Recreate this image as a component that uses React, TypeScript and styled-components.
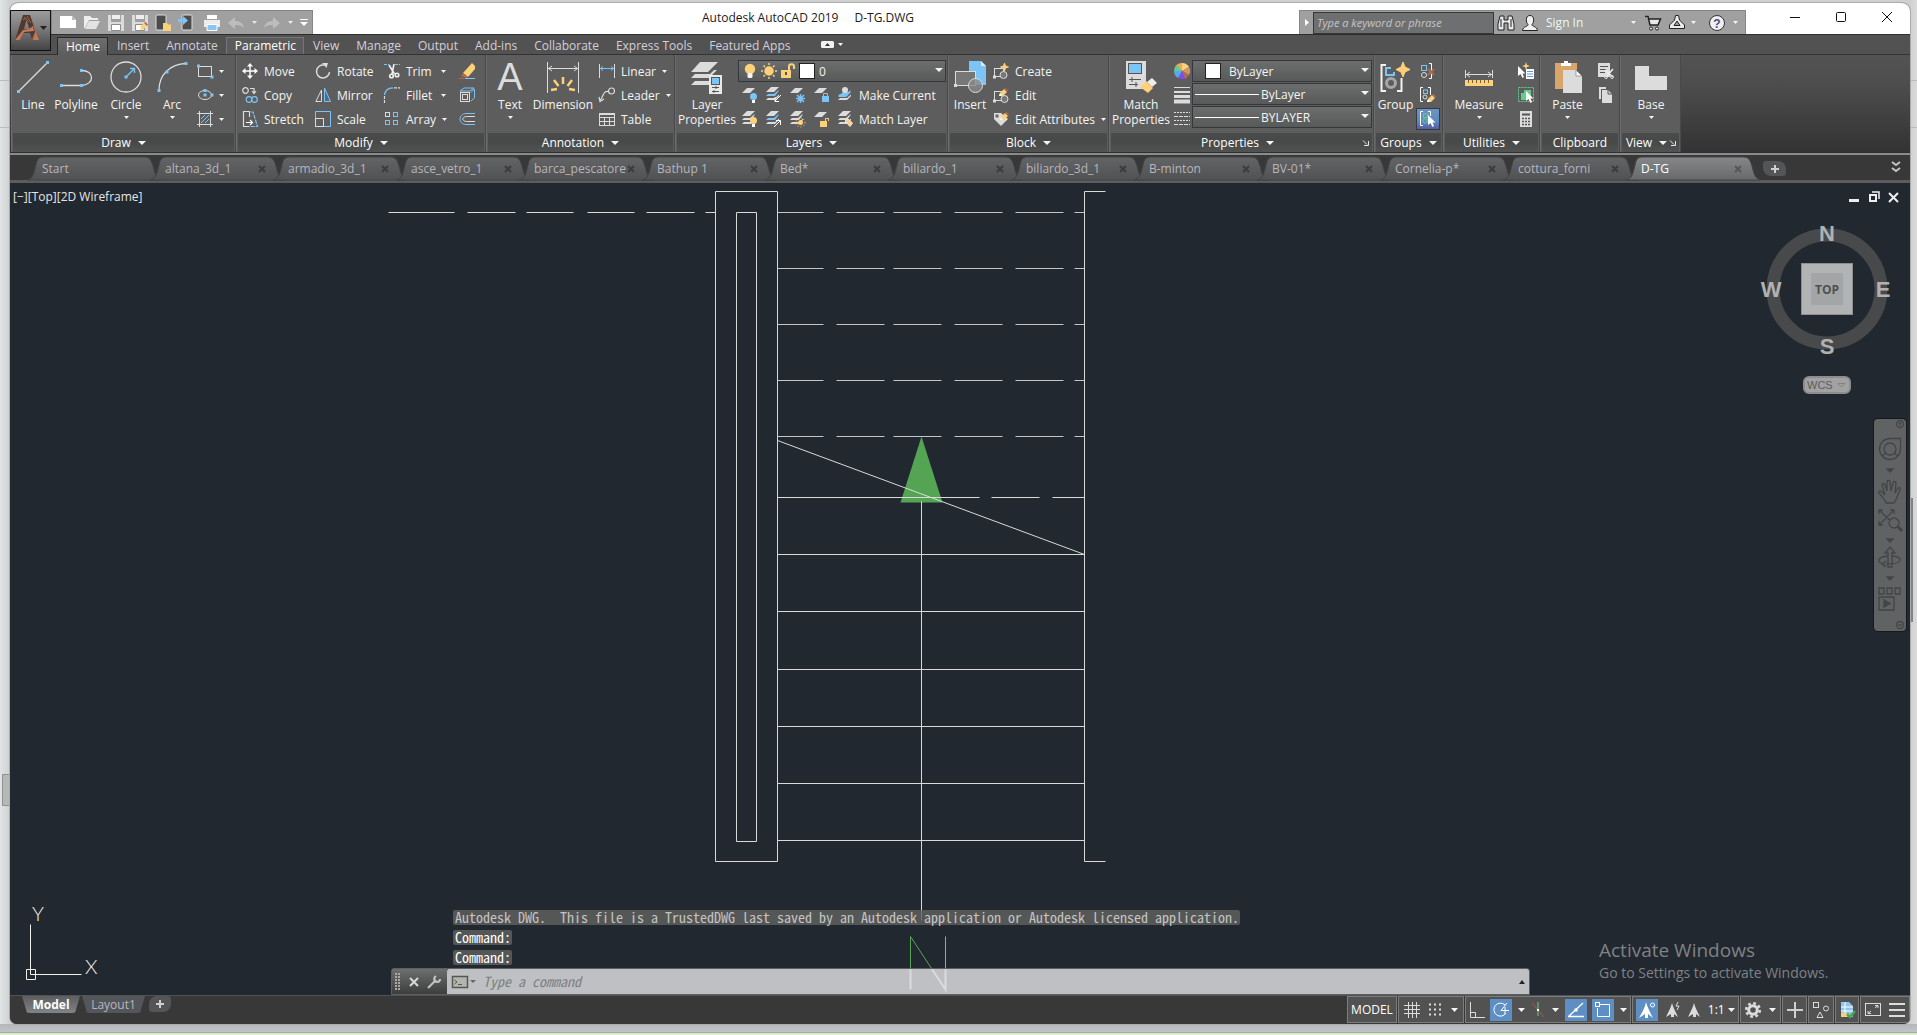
import React from "react";
import styled, { createGlobalStyle, css } from "styled-components";

const W = "#dcdcdc";
const B = "#7cc4f6";
const O = "#fdd07a";
const R = "#b06a4c";
const G = "#62cc8c";

const GlobalStyle = createGlobalStyle`
  * { box-sizing: border-box; }
  html, body { margin: 0; padding: 0; }
  body {
    background: #d3d5d5;
    font-family: "Open Sans", "Noto Sans", sans-serif;
    font-size: 12px;
    color: #f4f4f4;
  }
  button, input, select { font: inherit; color: inherit; margin: 0; }
  button { border: 0; background: none; padding: 0; }
  svg { display: block; flex: none; overflow: visible; }
`;

/* ---------- desktop behind the window ---------- */

const Desktop = styled.div`
  position: relative;
  min-height: 100vh;
  display: flex;
  flex-direction: column;
  padding: 3px 7px 0 10px;
  background: linear-gradient(90deg, #e0e4e4 0, #cfd1d1 10px, #cfd1d1 calc(100% - 7px), #dcdada 100%);
`;

const DesktopFooter = styled.div`
  height: 11px;
  margin: 0 -7px 0 -10px;
  background: linear-gradient(#b4b7b7, #c2c5c5 8px, #a6a9a6 8px, #a6a9a6 9px, #dcebcf 9px);
`;

const BackScroll = styled.div<{ $side: "left" | "right" }>`
  position: absolute;
  ${(p) =>
    p.$side === "left"
      ? css`left: 2px; top: 774px; width: 9px; height: 32px; border: 1px solid #8f9291; background: #b5b8b7;`
      : css`right: 4px; top: 498px; width: 2px; height: 124px; background: #818487;`}
`;

const Rule = styled.div<{ $top: number }>`
  position: absolute;
  top: ${(p) => p.$top}px;
  left: 0;
  right: 0;
  height: 1px;
  background: #b9bcbc;
`;

const Window = styled.div`
  position: relative;
  flex: 1;
  display: flex;
  flex-direction: column;
  border-radius: 8px 8px 7px 7px;
  overflow: hidden;
  background: #383838;
  box-shadow: 0 0 0 1px #a9acac;
`;

/* ---------- title bar ---------- */

const TitleBar = styled.header`
  display: flex;
  align-items: flex-end;
  height: 31px;
  background: #fff;
  color: #1c1c1c;
`;

const AppButton = styled.button`
  position: absolute;
  left: 0;
  top: 7px;
  z-index: 3;
  width: 41px;
  height: 41px;
  display: flex;
  align-items: center;
  padding: 0 2px 6px 4px;
  gap: 1px;
  border: 1px solid #111;
  background: linear-gradient(#9c9c9c, #7a7a7a 45%, #444);
`;

const QuickBar = styled.div`
  display: flex;
  align-items: center;
  width: 262px;
  height: 24px;
  margin-left: 41px;
  padding-left: 8px;
  gap: 8px;
  background: #a0a0a0;
  border: 1px solid #868686;
  border-bottom: 0;
`;

const IconButton = styled.button<{ $w?: number }>`
  width: ${(p) => p.$w ?? 16}px;
  height: 20px;
  display: flex;
  align-items: center;
  justify-content: center;
  flex: none;
`;

const Title = styled.h1`
  flex: 1;
  display: flex;
  justify-content: center;
  gap: 16px;
  margin: 0;
  align-self: center;
  padding: 0 0 2px 4px;
  font-size: 12px;
  font-weight: 400;
  line-height: 16px;
  white-space: nowrap;
`;

const InfoBar = styled.div`
  display: flex;
  align-items: center;
  width: 447px;
  height: 24px;
  background: #a0a0a0;
  border: 1px solid #868686;
  border-bottom: 0;
  color: #e9fbf5;
`;

const SearchInput = styled.input`
  width: 181px;
  height: 22px;
  padding: 0 3px;
  border: 1px solid #33363a;
  background: #6e6f70;
  font-size: 11px;
  font-style: italic;
  &::placeholder { color: #c6c6c6; opacity: 1; }
`;

const SignIn = styled.button`
  width: 94px;
  display: flex;
  align-items: center;
  justify-content: space-between;
  padding: 0 0 0 4px;
`;

const WindowButtons = styled.div`
  display: flex;
  align-self: flex-start;
  height: 28px;
  margin-left: 26px;
`;

const WindowButton = styled.button`
  width: 46px;
  height: 28px;
  display: flex;
  align-items: center;
  justify-content: center;
`;

/* ---------- ribbon ---------- */

const TabRow = styled.nav`
  display: flex;
  align-items: flex-end;
  height: 21px;
  padding-left: 47px;
  background: #525252;
  border-top: 1px solid #2c2e30;
  border-bottom: 1px solid #313335;
`;

const RibbonTab = styled.button<{ $state?: "active" | "hover" }>`
  height: 17px;
  padding: 0 7px 0 8px;
  line-height: 14px;
  color: #d2cfdd;
  border: 1px solid transparent;
  border-bottom: 0;
  ${(p) =>
    p.$state === "active" &&
    css`
      height: 18px;
      margin-bottom: -1px;
      color: #fff;
      border-color: #262829;
      background: linear-gradient(#6e6e6e, #5d5d5d);
    `}
  ${(p) =>
    p.$state === "hover" &&
    css`
      color: #fff;
      border-color: #767676;
      background: #5b5b5b;
    `}
`;

const RibbonMinimize = styled.button`
  display: flex;
  align-items: center;
  align-self: center;
  margin-left: 22px;
`;

const Ribbon = styled.div`
  display: flex;
  height: 98px;
  padding-left: 1px;
  background: linear-gradient(#525352, #4c4d4c 30%, #333);
  border-bottom: 1px solid #2d2f30;
`;

const Panel = styled.section<{ $w: number }>`
  flex: none;
  width: ${(p) => p.$w}px;
  display: flex;
  flex-direction: column;
  background: #5d5d5d;
  border-left: 1px solid #6b6b6b;
  border-right: 1px solid #484a4a;
`;

const PanelBody = styled.div`
  flex: 1;
  display: flex;
  align-items: flex-start;
  padding-top: 4px;
`;

const PanelTitle = styled.button<{ $launcher?: boolean }>`
  position: relative;
  display: flex;
  align-items: center;
  justify-content: center;
  gap: 7px;
  height: 19px;
  margin: 0 1px;
  padding-right: ${(p) => (p.$launcher ? 8 : 0)}px;
  background: linear-gradient(#4a4c4b, #474948 45%, #515352);
  color: #fff;
`;

const Launcher = styled.span`
  position: absolute;
  right: 3px;
  top: 7px;
`;

const BigButton = styled.button<{ $w: number }>`
  flex: none;
  width: ${(p) => p.$w}px;
  padding-top: 2px;
  display: flex;
  flex-direction: column;
  align-items: center;
  line-height: 15px;
  white-space: nowrap;
  & > svg:first-child, & > i { margin-bottom: 4px; }
`;

const BigLetter = styled.i`
  height: 32px;
  font-family: "Liberation Sans", sans-serif;
  font-size: 38px;
  line-height: 32px;
  font-style: normal;
  color: #dcdcdc;
`;

const Rows = styled.div<{ $cols: string; $ml?: number }>`
  display: grid;
  grid-template-columns: ${(p) => p.$cols};
  grid-auto-rows: 24px;
  margin-left: ${(p) => p.$ml ?? 0}px;
`;

const Cmd = styled.button<{ $spread?: boolean }>`
  display: flex;
  align-items: center;
  gap: 6px;
  height: 24px;
  min-width: 0;
  white-space: nowrap;
  justify-content: ${(p) => (p.$spread ? "space-between" : "flex-start")};
  & > span { flex: ${(p) => (p.$spread ? 1 : "none")}; text-align: left; }
`;

const Stack = styled.div<{ $w: number; $combos?: boolean }>`
  flex: none;
  width: ${(p) => p.$w}px;
  display: flex;
  flex-direction: column;
  padding-top: ${(p) => (p.$combos ? 1 : 0)}px;
  gap: ${(p) => (p.$combos ? 1 : 0)}px;
`;

const Combo = styled.label`
  position: relative;
  display: flex;
  align-items: center;
  height: 22px;
  padding-left: 3px;
  gap: 3px;
  border: 1px solid #34373b;
  background: linear-gradient(#6c6e6e, #585a5a);
  & > svg:last-child { position: absolute; right: 2px; top: 7px; pointer-events: none; }
`;

const Select = styled.select<{ $pad?: number }>`
  appearance: none;
  flex: 1;
  min-width: 0;
  height: 20px;
  border: 0;
  padding: 0 0 0 ${(p) => p.$pad ?? 0}px;
  background: transparent;
  color: #f4f4f4;
  outline: 0;
`;

const Swatch = styled.span<{ $m?: number }>`
  flex: none;
  width: 14px;
  height: 14px;
  margin-left: ${(p) => p.$m ?? 0}px;
  background: #fff;
  outline: 1px solid #222;
`;

const Toggle = styled.button<{ $on?: boolean }>`
  width: 24px;
  height: ${(p) => (p.$on ? 22 : 24)}px;
  margin: ${(p) => (p.$on ? "1px 0 1px auto" : "0 0 0 auto")};
  display: flex;
  align-items: center;
  justify-content: center;
  ${(p) =>
    p.$on &&
    css`
      border: 1px solid #353b44;
      background: linear-gradient(#6d93c0, #5a8cc2 60%, #5a5ba0);
    `}
`;

/* ---------- document tabs ---------- */

const DocTabs = styled.div`
  display: flex;
  align-items: flex-end;
  height: 30px;
  padding-left: 17px;
  border-top: 2px solid #8b8b8b;
  border-bottom: 3px solid #5c5c5c;
  background: #383838;
`;

const DocTab = styled.button<{ $active?: boolean }>`
  position: relative;
  flex: none;
  width: 133px;
  height: 24px;
  margin-right: -10px;
  padding: 1px 17px 0 15px;
  display: flex;
  align-items: center;
  justify-content: space-between;
  color: ${(p) => (p.$active ? "#ffffff" : "#b9b5bd")};
  z-index: ${(p) => (p.$active ? 2 : 0)};
  & > svg:first-child { position: absolute; left: 0; top: 0; }
  & > span, & > svg:last-child { position: relative; }
`;

const NewTab = styled.button`
  width: 23px;
  height: 15px;
  margin: 0 0 4px 14px;
  display: flex;
  align-items: center;
  justify-content: center;
  border-radius: 3px 8px 3px 8px;
  background: #535556;
`;

const MoreTabs = styled.button`
  margin: 0 10px 7px auto;
`;

/* ---------- drawing area ---------- */

const Canvas = styled.main`
  position: relative;
  flex: 1;
  min-height: 480px;
  background: #222830;
  overflow: hidden;
`;

const Drawing = styled.svg`
  position: absolute;
  left: 0;
  top: 0;
  width: 100%;
  height: 100%;
`;

const ViewControls = styled.div`
  position: absolute;
  left: 3px;
  top: 6px;
  line-height: 16px;
  display: flex;
  color: #e6e6e6;
`;

const ViewportButtons = styled.div`
  position: absolute;
  right: 11px;
  top: 8px;
  display: flex;
  gap: 8px;
`;

const ViewCube = styled.div`
  position: absolute;
  right: 17px;
  top: 36px;
  width: 132px;
  display: flex;
  flex-direction: column;
  align-items: center;
  gap: 15px;
`;

const WcsButton = styled.button`
  width: 48px;
  height: 18px;
  display: flex;
  align-items: center;
  justify-content: space-between;
  padding: 0 3px 0 2px;
  border: 2px solid #8c8d8f;
  border-radius: 6px;
  background: #a2a2a3;
  color: #5c5d5f;
  font: 11px "Liberation Sans", sans-serif;
`;

const NavBar = styled.div`
  position: absolute;
  right: 4px;
  top: 236px;
  width: 32px;
  height: 212px;
  border-radius: 4px;
  background: #616263;
  box-shadow: 0 0 0 1px #15191e;
`;

const Watermark = styled.div`
  position: absolute;
  left: calc(100% - 311px);
  bottom: 12px;
  color: #7f8286;
  white-space: nowrap;
  font-size: 14px;
  line-height: 20px;
  & > strong { display: block; font-weight: 400; font-size: 19px; line-height: 26px; }
`;

const CommandArea = styled.div`
  position: absolute;
  left: 381px;
  right: 380px;
  bottom: 0;
`;

const History = styled.div`
  display: flex;
  flex-direction: column;
  align-items: flex-start;
  gap: 5px;
  padding: 0 0 3px 62px;
`;

const mono = css`
  font-family: "Noto Sans Mono CJK SC", "DejaVu Sans Mono", monospace;
  font-size: 14px;
`;

const Message = styled.pre<{ $bright?: boolean }>`
  ${mono}
  margin: 0;
  height: 15px;
  line-height: 15px;
  padding: 0 1px 0 2px;
  border-radius: 2px;
  background: rgba(96, 97, 96, 0.82);
  color: ${(p) => (p.$bright ? "#fff" : "#c4c4c4")};
`;

const CommandLine = styled.div`
  display: flex;
  height: 27px;
  border: 1px solid #5d5f60;
  border-radius: 3px 3px 0 0;
`;

const CommandTools = styled.div`
  width: 55px;
  display: flex;
  align-items: center;
  justify-content: space-between;
  padding: 0 6px 0 3px;
  background: linear-gradient(#6d6e6e, #3c3d3d);
`;

const CommandField = styled.label`
  flex: 1;
  display: flex;
  align-items: center;
  padding: 0 4px 0 5px;
  gap: 2px;
  background: rgba(214, 215, 217, 0.87);
  border-radius: 2px 2px 0 0;
`;

const CommandInput = styled.input`
  ${mono}
  flex: 1;
  min-width: 0;
  height: 20px;
  padding: 0 0 2px 5px;
  border: 0;
  outline: 0;
  background: transparent;
  font-style: italic;
  &::placeholder { color: #7d7e80; opacity: 1; }
`;

/* ---------- bottom bar ---------- */

const BottomBar = styled.footer`
  display: flex;
  height: 29px;
  padding-left: 12px;
  border-top: 1px solid #505254;
  background: #383838;
`;

const LayoutTab = styled.button<{ $w: number; $active?: boolean }>`
  width: ${(p) => p.$w}px;
  height: 17px;
  margin-right: 2px;
  line-height: 16px;
  border-radius: 0 0 8px 8px;
  background: ${(p) => (p.$active ? "linear-gradient(#5c5e60, #808387)" : "#54565a")};
  color: ${(p) => (p.$active ? "#fff" : "#b9b5c0")};
  font-weight: ${(p) => (p.$active ? 700 : 400)};
  clip-path: polygon(0 0, 100% 0, calc(100% - 5px) 100%, 5px 100%);
`;

const AddLayout = styled.button`
  width: 22px;
  height: 16px;
  margin-left: 2px;
  display: flex;
  align-items: center;
  justify-content: center;
  border-radius: 8px 3px 8px 3px;
  background: #535556;
`;

const StatusBar = styled.div`
  display: flex;
  gap: 1px;
  height: 27px;
  margin-left: auto;
`;

const Group = styled.div<{ $w: number }>`
  width: ${(p) => p.$w}px;
  display: flex;
  align-items: center;
  justify-content: space-around;
  border: 1px solid #7c7d7d;
  background: #525252;
  color: #fff;
`;

const StatusButton = styled.button<{ $on?: boolean }>`
  min-width: ${(p) => (p.$on ? 22 : 8)}px;
  height: 22px;
  display: flex;
  align-items: center;
  justify-content: center;
  gap: 3px;
  background: ${(p) => (p.$on ? "#5d8fc5" : "transparent")};
`;

/* ---------- drawings ---------- */

type IconProps = { w?: number; h?: number; s?: string; sw?: number; children?: React.ReactNode };

const Icon = ({ w = 16, h = 16, s = W, sw = 1, children }: IconProps) => (
  <svg width={w} height={h} viewBox={`0 0 ${w} ${h}`} fill="none" stroke={s} strokeWidth={sw} aria-hidden="true">
    {children}
  </svg>
);

const Arrow = ({ w = 5, c = "#f4f4f4" }: { w?: number; c?: string }) => {
  const h = Math.ceil(w / 2);
  return (
    <svg width={w} height={h} viewBox={`0 0 ${w} ${h}`} aria-hidden="true">
      <path d={`M0 0H${w}L${w / 2} ${h}Z`} fill={c} />
    </svg>
  );
};

const Dots = ({ at, c = B }: { at: [number, number][]; c?: string }) => (
  <>
    {at.map(([x, y]) => (
      <rect key={`${x}-${y}`} x={x - 1.5} y={y - 1.5} width={3} height={3} fill={c} stroke="none" />
    ))}
  </>
);

const Cursor = ({ x, y }: { x: number; y: number }) => (
  <path transform={`translate(${x} ${y})`} d="M0 0V10L2.500 8L4.500 12L6 11L4.500 7.500H7.500Z" fill="#fff" stroke="none" />
);

const Pencil = ({ x, y }: { x: number; y: number }) => (
  <g transform={`translate(${x} ${y})`} stroke="none">
    <path d="M0 8L1 5L5 1L8 4L4 8Z" fill={O} />
    <path d="M5 1L6.500 0L9 2.500L8 4Z" fill={R} />
    <path d="M0 8L1 5L3 7.500Z" fill="#fff" />
  </g>
);

const LineIcon = () => (
  <Icon w={32} h={32} sw={1.3}><path d="M2 30L31 1" /><Dots at={[[1.5, 30.5], [30.5, 1.5]]} /></Icon>
);
const PolylineIcon = () => (
  <Icon w={32} h={32} sw={1.3}><path d="M1 24.500H21C35 24 35 9 21 9.500" /><Dots at={[[1.5, 24.5], [21.5, 24.5], [21.5, 9.5]]} /></Icon>
);
const CircleIcon = () => (
  <Icon w={32} h={32} sw={1.3}><circle cx="16" cy="16" r="15" /><path d="M16 16L24 8M20 7.500H24.500V12" stroke={B} /><Dots at={[[16, 16]]} /></Icon>
);
const ArcIcon = () => (
  <Icon w={32} h={32} sw={1.3}><path d="M3 29C3 14 14 3 30 2.500" /><Dots at={[[3, 29.5], [11, 11], [30, 2.5]]} /></Icon>
);
const RectIcon = () => (
  <Icon><rect x="1.500" y="3.500" width="13" height="10" /><Dots at={[[1.5, 3], [15, 14]]} /></Icon>
);
const EllipseIcon = () => (
  <Icon><ellipse cx="8" cy="8" rx="6.500" ry="4.500" /><Dots at={[[8, 3.5], [8, 8], [15, 8]]} /></Icon>
);
const HatchIcon = () => (
  <Icon><path d="M0 2.500H16M0 13.500H16M2.500 0V16M13.500 0V16" /><path d="M4 8L8 4M4 12L12 4M8 12L12 8" stroke={B} /></Icon>
);
const MoveIcon = () => (
  <Icon s="#fff" sw={1.4}><path d="M8 2V14M2 8H14" /><path d="M8 0L11 3.500H5ZM8 16L5 12.500H11ZM0 8L3.500 5V11ZM16 8L12.500 11V5Z" fill="#fff" stroke="none" /></Icon>
);
const CopyIcon = () => (
  <Icon sw={1.2}><circle cx="3.500" cy="3.500" r="2.800" /><path d="M8 1.500H12V6M10 4L12 6.500L14 4" /><circle cx="7" cy="12.500" r="2.800" stroke={B} /><circle cx="12.500" cy="12.500" r="2.800" stroke={B} /></Icon>
);
const StretchIcon = () => (
  <Icon sw={1.2}><path d="M7 15.500H1.500V.500H7.500V6" /><path d="M9 1L11 1L15.500 15.500H7" stroke={B} strokeDasharray="4 1" /><path d="M4 11.500H10M8 9L10.500 11.500L8 14" stroke="#fff" /></Icon>
);
const RotateIcon = () => (
  <Icon sw={1.5}><path d="M9 2A6.500 6.500 0 1 0 14.500 9" /><path d="M7 0L13 0L11.500 5Z" fill={W} stroke="none" /></Icon>
);
const MirrorIcon = () => (
  <Icon><path d="M6.500 3V14.500H.800Z" /><path d="M9.500 1V14.500H15.500Z" stroke={B} fill="#4f6d82" /></Icon>
);
const ScaleIcon = () => (
  <Icon><path d="M.500 7V.500H15.500V15.500H9" stroke={B} /><rect x=".500" y="7.500" width="8" height="8" /></Icon>
);
const TrimIcon = () => (
  <Icon sw={1.6} s="#f0f0f0"><path d="M0 1.500H5M11 1.500H16" stroke={B} strokeDasharray="3 1" strokeWidth="1" /><path d="M5 2L10.500 11M10 1L8 11" /><circle cx="7.500" cy="13" r="1.800" /><circle cx="13" cy="12" r="1.800" /></Icon>
);
const FilletIcon = () => (
  <Icon sw={1.2}><path d="M.500 8C1 4 4 1 9 .800" stroke={B} /><path d="M10 .800H16M.500 9V16" strokeDasharray="3 1" /></Icon>
);
const ArrayIcon = () => (
  <Icon><rect x="1.500" y="1.500" width="4" height="4" /><rect x="9.500" y="1.500" width="4" height="4" stroke={B} /><rect x="1.500" y="9.500" width="4" height="4" stroke={B} /><rect x="9.500" y="9.500" width="4" height="4" stroke={B} /></Icon>
);
const EraseIcon = () => (
  <Icon><path d="M4 10L13 0L16 3V6L9 14Z" fill={O} stroke="none" /><path d="M4 10L9 14L7 15L2 13Z" fill={R} stroke="none" /><path d="M0 15.500H5" stroke={R} /><path d="M6 15.500H16" stroke={B} /></Icon>
);
const ExplodeIcon = () => (
  <Icon><rect x="1.500" y="5.500" width="9" height="9" /><rect x="3.500" y="7.500" width="5" height="5" /><path d="M1 4L5 1H15L11 4ZM12 5.500L15.500 2V11L12 14" stroke={B} /></Icon>
);
const OffsetIcon = () => (
  <Icon><path d="M16 2.500H7C-1 3 -1 13 7 13.500H16" stroke={B} /><path d="M16 5.500H7.500C2.500 6 2.500 10 7.500 10.500H16" /></Icon>
);
const DimensionIcon = () => (
  <Icon w={34} h={32}><path d="M1.500 1V32M32.500 1V32M2 7.500H32M6 5L2.500 7.500L6 10M28 5L31.500 7.500L28 10" /><g stroke={O} strokeWidth="2.500"><path d="M17 16V23M8 19L12.500 25M26 19L21.500 25M5 29L11 28M29 29L23 28" /></g></Icon>
);
const LinearIcon = () => (
  <Icon><path d="M.500 1V15M15.500 1V15" /><path d="M1 5.500H15M4 3.500L1.500 5.500L4 7.500M12 3.500L14.500 5.500L12 7.500" stroke={B} /></Icon>
);
const LeaderIcon = () => (
  <Icon sw={1.2}><circle cx="12.500" cy="4" r="3" /><path d="M9.500 4.500C4 4 5 8 1.500 13M0 10L1 14.500L5 12" /></Icon>
);
const TableIcon = () => (
  <Icon><rect x=".500" y="2.500" width="15" height="12" /><path d="M0 3.500H16M0 6.500H16M0 10.500H16M5.500 6V15M10.500 6V15" /></Icon>
);
const LayerPropIcon = () => (
  <Icon w={34} h={32}><g stroke="none" fill={W}><path d="M10 1H28L18 11H1Z" /><path d="M1 17L5 13H20L24 9H27L19 17Z" /><path d="M1 24L5 20H19V24Z" /></g><rect x="19" y="14" width="13" height="19" fill="#e8e8e8" stroke="none" /><rect x="21.500" y="16.500" width="8" height="7" fill={B} stroke="#555" /><path d="M22 26.500H29M22 30.500H29M26 25V28M24 29V32" stroke="#555" /></Icon>
);

const Sheet = ({ y = 0, c = W }: { y?: number; c?: string }) => (
  <path d={`M6 ${y}H14L9 ${y + 5}H1Z`} fill={c} stroke="none" />
);
const BulbIcon = () => (
  <Icon><circle cx="8" cy="6" r="5.200" fill={O} stroke="none" /><rect x="5.500" y="10" width="5" height="5" rx="1.500" fill="#f4f4f4" stroke="none" /></Icon>
);
const SunIcon = () => (
  <Icon s={O} sw={1.5}><circle cx="8" cy="8" r="4" fill={O} /><path d="M8 0V2M8 14V16M0 8H2M14 8H16M2.500 2.500L4 4M12 12L13.500 13.500M2.500 13.500L4 12M12 4L13.500 2.500" /></Icon>
);
const UnlockIcon = () => (
  <Icon><rect x="1" y="7" width="10" height="8" fill={O} stroke="none" /><path d="M9 7V3.500C9 .500 14 .500 14 3.500V6" stroke={O} strokeWidth="2" /><rect x="5" y="9" width="2" height="3" fill="#555" stroke="none" /></Icon>
);

type LayerMark = "off" | "iso" | "freeze" | "lock" | "make" | "on" | "uniso" | "thaw" | "unlock" | "match";
const LayerIcon = ({ m }: { m: LayerMark }) => {
  const single = m === "off" || m === "freeze" || m === "lock" || m === "unlock";
  const blue = m === "iso" || m === "uniso" || m === "make";
  return (
    <Icon>
      <Sheet y={single ? 1 : m === "make" ? 5 : 0} c={m === "make" ? B : W} />
      {!single && <path d="M1 9L3 7H9L13 3.500H14L10 9Z" fill={blue ? B : W} stroke="none" />}
      {!single && <path d="M1 13L3 11H10L14 7.500V9L10 13Z" fill={W} stroke="none" />}
      {m === "off" && <><circle cx="12.500" cy="9.500" r="3.500" fill={B} stroke="none" /><rect x="11" y="13" width="3" height="3" fill="#fff" stroke="none" /></>}
      {m === "on" && <><circle cx="12.500" cy="9.500" r="3.500" fill={O} stroke="none" /><rect x="11" y="13" width="3" height="3" fill="#fff" stroke="none" /></>}
      {m === "iso" && <path d="M16 8L10 14M10 10V14.500H14" stroke="#fff" />}
      {m === "uniso" && <path d="M9 16L15 10M11 9.500H15.500V14" stroke="#fff" />}
      {m === "freeze" && <path d="M11.500 7V16M7 11.500H16M8 8L15 15M15 8L8 15" stroke={B} strokeWidth="1.500" />}
      {m === "thaw" && <><circle cx="11.500" cy="11.500" r="2.500" fill={O} stroke="none" /><circle cx="11.500" cy="11.500" r="4.500" stroke={O} strokeDasharray="1 2" /></>}
      {m === "lock" && <><rect x="9" y="9" width="7" height="6" fill={B} stroke="none" /><path d="M10.500 9V6.500H14.500V9" stroke={B} /></>}
      {m === "unlock" && <><rect x="7" y="10" width="7" height="6" fill={O} stroke="none" /><path d="M12.500 10V7.500H15.500V10" stroke={O} /></>}
      {m === "make" && <circle cx="8" cy="3" r="3" fill={W} stroke="none" />}
      {m === "match" && <path d="M8 10L11 8L15.500 12L13 15.500Z" fill={O} stroke="#eee" />}
    </Icon>
  );
};

const InsertIcon = () => (
  <Icon w={32} h={32}><path d="M15 0H27L32 5V24H15Z" fill={B} stroke="none" /><path d="M27 0V5H32Z" fill="#e8e8e8" stroke="none" /><rect x="1.500" y="10.500" width="20" height="14" fill="#777" /><circle cx="21.500" cy="24.500" r="7" fill="#8a8a8a" fillOpacity=".8" /><Dots at={[[1.5, 24.5]]} c={W} /></Icon>
);
const CreateIcon = () => (
  <Icon><rect x="1.500" y="5.500" width="9" height="8" /><circle cx="10.500" cy="12" r="3.500" fill="#777" /><path d="M11.500 0L12.500 3L15.500 4L12.500 5L11.500 8L10.500 5L7.500 4L10.500 3Z" fill={O} stroke={O} /><Dots at={[[1.5, 14]]} c={W} /></Icon>
);
const EditIcon = () => (
  <Icon><rect x="1.500" y="4.500" width="9" height="9" /><circle cx="11.500" cy="12" r="3.500" fill="#777" /><Pencil x={6} y={1} /><Dots at={[[1.5, 14]]} c={W} /></Icon>
);
const AttrIcon = () => (
  <Icon><path d="M1 2H8L15 8L8 15L1 8Z" fill={W} stroke="none" /><Dots at={[[4, 5]]} c="#666" /><Pencil x={7} y={1} /></Icon>
);
const MatchPropIcon = () => (
  <Icon w={32} h={32}><rect x="1" y="0" width="20" height="28" fill={W} stroke="none" /><rect x="3.500" y="2.500" width="13" height="10" fill={B} stroke="#555" /><path d="M4 18.500H16M7 16V21M4 23.500H13M11 21V26" stroke="#555" /><path d="M22 21L27 17L32 22L27 26Z" fill="#eee" stroke="none" /><path d="M15 26L21 20L28 27L23 32Z" fill={O} stroke="none" /></Icon>
);
const WheelIcon = () => (
  <Icon><g stroke="none"><path d="M8 8V0A8 8 0 0 1 15 4Z" fill={O} /><path d="M8 8V0A8 8 0 0 0 1 4Z" fill="#f0a85c" /><path d="M8 8L15 4A8 8 0 0 1 15 12Z" fill="#d39664" /><path d="M8 8L15 12A8 8 0 0 1 10 16Z" fill={R} /><path d="M8 8L11 15.500A8 8 0 0 1 4 15Z" fill="#7a4ff2" /><path d="M8 8L4 15A8 8 0 0 1 0 8Z" fill="#5fa8e8" /><path d="M8 8H0A8 8 0 0 1 3 2Z" fill={G} /></g></Icon>
);
const WeightIcon = () => (
  <Icon><path d="M0 .500H16" /><path d="M0 5H16" strokeWidth="2" /><path d="M0 9.500H16" strokeWidth="3" /><path d="M0 14.500H16" strokeWidth="4" /></Icon>
);
const TypeIcon = () => (
  <Icon><path d="M0 1.500H16M0 9.500H16" strokeDasharray="2 1" /><path d="M0 5.500H16M0 13.500H16" strokeDasharray="4 1" /></Icon>
);
const GroupIcon = () => (
  <Icon w={32} h={32} sw={2}><path d="M6 4H1.500V30H6M17 30H21.500V17" stroke="#f2f2f2" /><path d="M11 7H6V14H14V11" stroke={B} /><circle cx="11" cy="22" r="4.500" stroke="#a5a7a9" strokeWidth="3" /><path d="M23 1L25 6L30 8.500L25 11L23 16L21 11L16 8.500L21 6Z" fill={O} stroke={O} strokeWidth="1" /></Icon>
);
const UngroupIcon = () => (
  <Icon><rect x="1.500" y="2.500" width="5" height="5" stroke={B} /><circle cx="4" cy="12" r="2.500" /><path d="M9 .500H11.500V15.500H9" stroke="#fff" /><path d="M8 6L14 12M14 6L8 12" stroke={R} strokeWidth="2" /></Icon>
);
const GroupEditIcon = () => (
  <Icon><path d="M3 .500H.500V14.500H3M8 .500H10.500V8" stroke="#fff" /><rect x="3.500" y="3" width="4" height="3.500" stroke={B} /><circle cx="5" cy="10" r="2" /><Pencil x={7} y={7} /></Icon>
);
const GroupSelIcon = () => (
  <Icon><path d="M3 .500H.500V14.500H3M8 .500H10.500V5" stroke="#fff" /><rect x="3.500" y="3" width="4" height="3.500" stroke={G} /><circle cx="5" cy="10" r="2.200" stroke={G} /><Cursor x={8} y={4} /></Icon>
);
const MeasureIcon = () => (
  <Icon w={32} h={32}><path d="M2.500 9V17M29.500 9V17M3 13.500H29M7 11L3.500 13.500L7 16M25 11L28.500 13.500L25 16" /><rect x="2" y="19" width="28" height="6" fill={O} stroke="none" /><path d="M5.500 19V22M9.500 19V22M13.500 19V22M17.500 19V22M21.500 19V22M25.500 19V22" stroke="#7a6537" /></Icon>
);
const QuickSelIcon = () => (
  <Icon><Cursor x={0} y={3} /><path d="M8 -1L9 2L12 3L9 4L8 7L7 4L4 3L7 2Z" fill={O} stroke="none" /><rect x="8" y="6" width="8" height="10" fill="#fff" stroke="none" /><path d="M9 8.500H15M9 11H15M9 13.500H15" stroke="#5c9bd6" /></Icon>
);
const SelAllIcon = () => (
  <Icon><rect x=".500" y=".500" width="15" height="14" stroke={G} strokeDasharray="2 1" /><path d="M3 6H6V3H13V9H9V13H3Z" fill={G} stroke="none" /><Cursor x={8} y={4} /></Icon>
);
const CalcIcon = () => (
  <Icon><rect x="2" y="0" width="12" height="16" fill={W} stroke="none" /><path d="M4 3.500H12" stroke="#555" strokeWidth="2" /><path d="M4 7.500H12M4 10.500H12M4 13.500H12" stroke="#555" strokeDasharray="2 1" strokeWidth="1.500" /></Icon>
);
const PasteIcon = () => (
  <Icon w={32} h={32}><rect x="3" y="2" width="22" height="26" fill="#d8a56b" stroke="none" /><path d="M9 2H12V0H16V2H19V5H9Z" fill="#fff" stroke="none" /><path d="M11 9H24L30 15V32H11Z" fill={W} stroke="none" /><path d="M24 9V15H30Z" fill="#fff" stroke="#555" strokeWidth=".500" /></Icon>
);
const CutIcon = () => (
  <Icon><rect x="0" y="0" width="12" height="14" fill={W} stroke="none" /><path d="M2 3.500H10M2 6.500H8M2 9.500H7" stroke="#555" /><path d="M7 7L15 14M15 6L8 14" stroke="#eee" strokeWidth="1.500" /><circle cx="8" cy="14" r="1.500" /><circle cx="14" cy="14" r="1.500" /></Icon>
);
const CopyClipIcon = () => (
  <Icon><path d="M1 0H8V2H3V12H1Z" fill={W} stroke="none" /><path d="M4 3H10L14 7V16H4Z" fill={W} stroke="none" /><path d="M10 3V7H14" stroke="#555" /></Icon>
);
const BaseIcon = () => (
  <Icon w={34} h={32}><path d="M1 5H15V15H33V29H1Z" fill={W} stroke="none" /></Icon>
);

const NewIcon = () => <Icon><path d="M0 1H12L16 5V13H0Z" fill="#fff" stroke="none" /><path d="M12 1V5H16Z" fill="#bbb" stroke="none" /></Icon>;
const OpenIcon = () => <Icon><path d="M0 1H6L8 3H14V5H5L1 13H0Z" fill="#eee" stroke="none" /><path d="M5 6H16L12 14H1Z" fill="#e2e2e2" stroke="none" /></Icon>;
const SaveIcon = ({ pen }: { pen?: boolean }) => (
  <Icon><path d="M0 0H16V16H0Z" fill="#dcdcdc" stroke="none" /><path d="M3 0H13V7H3Z" fill="#a0a0a0" stroke="none" /><path d="M4 0H12V4H4Z" fill="#eee" stroke="none" /><path d="M3.500 9.500H12.500V15.500H3.500Z" fill="#fff" stroke="#8d8d8d" />{pen && <Pencil x={7} y={7} />}</Icon>
);
const MobileIcon = ({ save }: { save?: boolean }) => (
  <Icon><rect x={save ? 2 : 0} y="0" width="10" height="15" rx="1" fill="#4c4c4c" stroke="#ddd" />{save ? <path d="M-2 4H3V1L8 5.500L3 10V7H-2Z" fill={B} stroke="none" /> : <path d="M7 8H11L12 9.500H15V16H7Z" fill={O} stroke="none" />}</Icon>
);
const PlotIcon = () => <Icon><path d="M3 0H13V4H3Z" fill="#fff" stroke="none" /><path d="M0 5H16V12H0Z" fill="#ececec" stroke="none" /><path d="M3 9.500H13V15.500H3Z" fill="#8ac4f0" stroke="#fff" /></Icon>;
const UndoIcon = ({ flip }: { flip?: boolean }) => (
  <Icon><path transform={flip ? "translate(16 0) scale(-1 1)" : undefined} d="M0 8L7 2V6C12 6 15 8 16 13C13 10 11 10 7 10V14Z" fill="#bdbdbd" stroke="none" /></Icon>
);
const Cross = ({ c = "#383a3b", n = 8, sw = 2 }: { c?: string; n?: number; sw?: number }) => (
  <Icon w={n} h={n} s={c} sw={sw}><path d={`M1 1L${n - 1} ${n - 1}M${n - 1} 1L1 ${n - 1}`} /></Icon>
);
const Plus = ({ n = 8, sw = 2, c = "#cfcfcf" }) => (
  <Icon w={n} h={n} s={c} sw={sw}><path d={`M${n / 2} 0V${n}M0 ${n / 2}H${n}`} /></Icon>
);
const LauncherIcon = () => <Icon w={6} h={6} s="#e6e6e6"><path d="M0 .500L4 4.500M5.500 1V5.500H1" /></Icon>;

const LogoIcon = () => (
  <svg width={24} height={27} viewBox="0 0 24 27" aria-hidden="true">
    <path d="M8 1H15L24 26H18L15.500 19H8L5 26H0Z M11.500 6L9 15H14.500Z" fillRule="evenodd" fill="#b36a4c" />
    <path d="M8 1H15L18 10L20 18L17 25L15 19H8L3 26H0Z M11.500 6L9 15H14.500Z" fillRule="evenodd" fill="#38302e" fillOpacity=".82" />
    <path d="M0 26L8 16L14 15L18 12L19 17L9 18L4 26ZM20 18L24 26H19Z" fill="#c3795a" />
    <path d="M9 3L14 8M12 2L16 9M8 6L11 4" stroke="#b36a4c" strokeWidth=".8" />
  </svg>
);

const DocShape = ({ active }: { active?: boolean }) => (
  <svg width={133} height={24} viewBox="0 0 133 24" aria-hidden="true">
    <defs>
      <linearGradient id={active ? "tabOn" : "tabOff"} x1="0" y1="0" x2="0" y2="1">
        <stop offset="0" stopColor={active ? "#85878a" : "#626465"} />
        <stop offset="1" stopColor={active ? "#67696a" : "#505253"} />
      </linearGradient>
    </defs>
    <path d="M0 24C6 23 7 17 9 9C10 3 12 1 17 1H117C123 1 124 4 126 10C128 18 129 22 134 24Z" fill={`url(#${active ? "tabOn" : "tabOff"})`} stroke="#414344" />
  </svg>
);

/* ---------- model space geometry ---------- */

const dashRows = [212, 268, 324, 380, 436];
const dashes: [number, number][] = [[777, 823], [836, 884], [893, 941], [954, 1002], [1015, 1063], [1074, 1084]];
const leftDashes: [number, number][] = [[388, 454], [467, 515], [526, 573], [587, 634], [646, 694], [705, 715]];
const treads = [554, 611, 669, 726, 783, 840];

const seg = (y: number) => ([a, b]: [number, number]) => `M${a} ${y}H${b}`;

const Model = () => (
  <Drawing aria-label="Stair plan">
    <g transform="translate(-9.500 -182.500)" fill="none" stroke="#d9dad8" strokeWidth={1}>
      <path d="M715 191H777V861H715Z M736 212H756V841H736Z M1105 191H1084V861H1105" />
      <path d={leftDashes.map(seg(212)).join("")} />
      <path d={dashRows.flatMap((y) => dashes.map(seg(y))).join("")} stroke="#c4c6c6" />
      <path d="M921 436L900 502H942Z" fill="#54a454" stroke="none" />
      <path d="M777 497H979M991 497H1039M1052 497H1084" />
      <path d={treads.map((y) => `M777 ${y}H1084`).join("")} />
      <path d="M777 440L1084 554" />
      <path d="M921 501V920" />
      <path d="M910 936V968M910 936L931 968" stroke="#55a555" />
      <path d="M945 936V968" stroke="#8fae8c" />
      <path d="M910 968V989M931 968L945 989V968" stroke="#ffffff" strokeWidth={2} />
      <path d="M30 924V974H81M26 969H35V979H26Z" stroke="#f0f0ea" />
    </g>
    <g fill="#f0f0ea" fontFamily="Lato, sans-serif" fontSize="20" fontWeight="300">
      <text x="22" y="738">Y</text>
      <text x="75" y="791">X</text>
    </g>
  </Drawing>
);

const Compass = () => (
  <svg width={132} height={142} viewBox="0 0 132 142" aria-label="View cube">
    <circle cx="66" cy="70" r="54" fill="none" stroke="#48494b" strokeWidth="13" />
    <rect x="40.500" y="44.500" width="51" height="51" fill="#b2b3b5" stroke="#8c8e90" />
    <rect x="50" y="54" width="32" height="32" fill="#a4a5a7" />
    <g fontWeight="700" textAnchor="middle">
      <text x="66" y="75" fontSize="12" fontFamily="Open Sans, sans-serif" fill="#4f5052">TOP</text>
      <g fontSize="22" fill="#b0b1b2" fontFamily="Liberation Sans, sans-serif">
        <text x="66" y="22">N</text>
        <text x="122" y="78">E</text>
        <text x="66" y="135">S</text>
        <text x="10" y="78">W</text>
      </g>
    </g>
  </svg>
);

const NavTools = () => (
  <svg width={32} height={212} viewBox="0 0 32 212" fill="none" stroke="#434546" strokeWidth={1.3} aria-label="Navigation bar">
    <circle cx="26" cy="5" r="3.500" /><path d="M24.500 3.500L27.500 6.500M27.500 3.500L24.500 6.500" />
    <path d="M16 19.500H26.500V30A10.500 10.500 0 1 1 16 19.500" /><circle cx="16" cy="30" r="6" /><path d="M8 37L12 34M24 37L20 34" />
    <path d="M13 50H19L16 53Z" fill="#434546" />
    <path d="M12 83C10 80 7 76 5 74C4 72 6 71 8 73L11 76L8 66C8 64 10 64 11 66L13 72L13 63C13 61 16 61 16 63L17 72L19 64C19 62 22 62 22 64L21 74L24 69C25 68 27 69 26 71L23 78C22 81 21 83 20 84H12Z" />
    <path d="M5 91L21 106M5 106L20 91M5 95V91H9M5 102V106H9M16 91H20V95" /><circle cx="20" cy="104" r="5" fill="#616263" /><path d="M23 107L28 112" strokeWidth="3" />
    <path d="M13 120H19L16 123Z" fill="#434546" />
    <path d="M14 148V134H11L16 128L21 134H18V148Z" /><path d="M11 146C2 143 3 138 14 137M18 137C30 138 30 145 12 145M12 142L8 145L12 148" />
    <path d="M13 158H19L16 161Z" fill="#434546" />
    <path d="M5 169H10V175H5ZM13 169H18V175H13ZM21 169H26V175H21ZM5 178H20V191H5Z" /><path d="M10 181V188L16 184.500Z" fill="#434546" />
    <circle cx="26" cy="206" r="3.500" /><path d="M24 206H28" />
  </svg>
);

/* ---------- sections ---------- */

const ribbonTabs = ["Home", "Insert", "Annotate", "Parametric", "View", "Manage", "Output", "Add-ins", "Collaborate", "Express Tools", "Featured Apps"];
const documents = ["Start", "altana_3d_1", "armadio_3d_1", "asce_vetro_1", "barca_pescatore", "Bathup 1", "Bed*", "biliardo_1", "biliardo_3d_1", "B-minton", "BV-01*", "Cornelia-p*", "cottura_forni", "D-TG"];

const Big = ({ w, icon, label, arrow }: { w: number; icon: React.ReactNode; label: string[]; arrow?: boolean }) => (
  <BigButton $w={w}>
    {icon}
    {label.map((l) => <span key={l}>{l}</span>)}
    {arrow && <svg width={5} height={8} viewBox="0 0 5 8" aria-hidden="true"><path d="M0 4H5L2.500 7Z" fill="#f4f4f4" /></svg>}
  </BigButton>
);

const Small = ({ icon, label, arrow, spread }: { icon: React.ReactNode; label?: string; arrow?: boolean; spread?: boolean }) => (
  <Cmd $spread={spread}>
    {icon}
    {label && <span>{label}</span>}
    {arrow && <Arrow />}
  </Cmd>
);

const RibbonPanel = ({ w, title, arrow = true, launcher, children }: { w: number; title: string; arrow?: boolean; launcher?: boolean; children: React.ReactNode }) => (
  <Panel $w={w}>
    <PanelBody>{children}</PanelBody>
    <PanelTitle $launcher={launcher}>
      <span>{title}</span>
      {arrow && <Arrow w={8} />}
      {launcher && <Launcher><LauncherIcon /></Launcher>}
    </PanelTitle>
  </Panel>
);

export default function App() {
  return (
    <Desktop>
      <GlobalStyle />
      <Rule $top={80} />
      <Rule $top={127} />
      <BackScroll $side="left" />
      <BackScroll $side="right" />
      <Window>
        <AppButton aria-label="Application menu"><LogoIcon /><Arrow w={7} c="#222" /></AppButton>
        <TitleBar>
          <QuickBar>
            <IconButton aria-label="New"><NewIcon /></IconButton>
            <IconButton aria-label="Open"><OpenIcon /></IconButton>
            <IconButton aria-label="Save"><SaveIcon /></IconButton>
            <IconButton aria-label="Save as"><SaveIcon pen /></IconButton>
            <IconButton aria-label="Open from mobile"><MobileIcon /></IconButton>
            <IconButton aria-label="Save to mobile"><MobileIcon save /></IconButton>
            <IconButton aria-label="Plot"><PlotIcon /></IconButton>
            <IconButton aria-label="Undo"><UndoIcon /></IconButton>
            <IconButton $w={4} aria-label="Undo list"><Arrow c="#e8e8e8" /></IconButton>
            <IconButton aria-label="Redo"><UndoIcon flip /></IconButton>
            <IconButton $w={4} aria-label="Redo list"><Arrow c="#e8e8e8" /></IconButton>
            <IconButton $w={8} aria-label="Customize"><Icon w={8} h={8}><path d="M0 .500H8" stroke="#fff" /><path d="M0 3H8L4 7Z" fill="#fff" stroke="none" /></Icon></IconButton>
          </QuickBar>
          <Title><span>Autodesk AutoCAD 2019</span><span>D-TG.DWG</span></Title>
          <InfoBar>
            <IconButton $w={13} aria-label="Collapse search"><Icon w={4} h={7}><path d="M0 0L4 3.500L0 7Z" fill="#fff" stroke="none" /></Icon></IconButton>
            <SearchInput aria-label="Search" placeholder="Type a keyword or phrase" />
            <IconButton $w={24} aria-label="Search"><Icon s="#222"><path d="M2 1H6V5H10V1H14L16 9V15H10V8H6V15H0V9Z" fill="#e8e8e8" /><path d="M3 4V12M13 4V12" /></Icon></IconButton>
            <IconButton $w={24} aria-label="Account"><Icon s="#222"><path d="M8 .500C3 .500 4 8 6 9.500C6 12 1 11 .500 15.500H15.500C15 11 10 12 10 9.500C12 8 13 .500 8 .500Z" fill="#f0f0f0" /></Icon></IconButton>
            <SignIn><span>Sign In</span><Arrow c="#f4f4f4" /></SignIn>
            <IconButton $w={34} aria-label="App store"><Icon s="#222"><path d="M0 1.500H3L5 10H13L15.500 4H4" fill="#e8e8e8" strokeWidth="1.500" /><circle cx="6" cy="13.500" r="1.500" fill="#eee" /><circle cx="12" cy="13.500" r="1.500" fill="#eee" /></Icon></IconButton>
            <IconButton $w={14} aria-label="Autodesk apps"><Icon s="#222"><path d="M6.500 .500H9.500L10.500 5L15.500 10V13.500H.500V10L5.500 5ZM8 6L5 10.500H11Z" fill="#ececec" fillRule="evenodd" /></Icon></IconButton>
            <IconButton $w={19} aria-label="Autodesk apps list"><Arrow c="#f4f4f4" /></IconButton>
            <IconButton $w={28} aria-label="Help">
              <svg width={16} height={16} viewBox="0 0 16 16" aria-hidden="true"><circle cx="8" cy="8" r="7.500" fill="#f0f0f0" stroke="#333" /><text x="8" y="12.500" textAnchor="middle" fontSize="12" fontWeight="700" fontFamily="Liberation Sans, sans-serif" fill="#4a4a8c">?</text></svg>
            </IconButton>
            <IconButton $w={8} aria-label="Help list"><Arrow c="#f4f4f4" /></IconButton>
          </InfoBar>
          <WindowButtons>
            <WindowButton aria-label="Minimize"><Icon w={10} h={10} s="#111"><path d="M0 5.500H10" /></Icon></WindowButton>
            <WindowButton aria-label="Maximize"><Icon w={10} h={10} s="#111"><rect x=".500" y=".500" width="9" height="9" rx="1" /></Icon></WindowButton>
            <WindowButton aria-label="Close"><Icon w={10} h={10} s="#111"><path d="M0 0L10 10M10 0L0 10" /></Icon></WindowButton>
          </WindowButtons>
        </TitleBar>

        <TabRow>
          {ribbonTabs.map((t) => (
            <RibbonTab key={t} $state={t === "Home" ? "active" : t === "Parametric" ? "hover" : undefined}>{t}</RibbonTab>
          ))}
          <RibbonMinimize aria-label="Minimize ribbon">
            <svg width={22} height={7} viewBox="0 0 22 7" aria-hidden="true"><rect width="13" height="7" rx="1.500" fill="#f2f2f2" /><path d="M4 5L6.500 2L9 5Z" fill="#333" /><path d="M17 2H22L19.500 5Z" fill="#f4f4f4" /></svg>
          </RibbonMinimize>
        </TabRow>

        <Ribbon>
          <RibbonPanel w={225} title="Draw">
            <Big w={42} icon={<LineIcon />} label={["Line"]} />
            <Big w={44} icon={<PolylineIcon />} label={["Polyline"]} />
            <Big w={56} icon={<CircleIcon />} label={["Circle"]} arrow />
            <Big w={36} icon={<ArcIcon />} label={["Arc"]} arrow />
            <Rows $cols="30px" $ml={7}>
              <Small icon={<RectIcon />} arrow />
              <Small icon={<EllipseIcon />} arrow />
              <Small icon={<HatchIcon />} arrow />
            </Rows>
          </RibbonPanel>
          <RibbonPanel w={250} title="Modify">
            <Rows $cols="73px 69px 62px 33px" $ml={5}>
              <Small icon={<MoveIcon />} label="Move" />
              <Small icon={<RotateIcon />} label="Rotate" />
              <Small icon={<TrimIcon />} label="Trim" arrow spread />
              <Toggle aria-label="Erase"><EraseIcon /></Toggle>
              <Small icon={<CopyIcon />} label="Copy" />
              <Small icon={<MirrorIcon />} label="Mirror" />
              <Small icon={<FilletIcon />} label="Fillet" arrow spread />
              <Toggle aria-label="Explode"><ExplodeIcon /></Toggle>
              <Small icon={<StretchIcon />} label="Stretch" />
              <Small icon={<ScaleIcon />} label="Scale" />
              <Small icon={<ArrayIcon />} label="Array" arrow spread />
              <Toggle aria-label="Offset"><OffsetIcon /></Toggle>
            </Rows>
          </RibbonPanel>
          <RibbonPanel w={189} title="Annotation">
            <Big w={46} icon={<BigLetter>A</BigLetter>} label={["Text"]} arrow />
            <Big w={60} icon={<DimensionIcon />} label={["Dimension"]} />
            <Rows $cols="75px" $ml={6}>
              <Small icon={<LinearIcon />} label="Linear" arrow />
              <Small icon={<LeaderIcon />} label="Leader" arrow />
              <Small icon={<TableIcon />} label="Table" />
            </Rows>
          </RibbonPanel>
          <RibbonPanel w={273} title="Layers">
            <Big w={62} icon={<LayerPropIcon />} label={["Layer", "Properties"]} />
            <Stack $w={208} $combos>
              <Combo>
                <BulbIcon /><SunIcon /><UnlockIcon /><Swatch $m={1} />
                <Select $pad={2} aria-label="Layer"><option>0</option></Select>
                <Arrow w={8} />
              </Combo>
              <Rows $cols="24px 24px 24px 24px 110px" $ml={3}>
                <Small icon={<LayerIcon m="off" />} />
                <Small icon={<LayerIcon m="iso" />} />
                <Small icon={<LayerIcon m="freeze" />} />
                <Small icon={<LayerIcon m="lock" />} />
                <Small icon={<LayerIcon m="make" />} label="Make Current" />
                <Small icon={<LayerIcon m="on" />} />
                <Small icon={<LayerIcon m="uniso" />} />
                <Small icon={<LayerIcon m="thaw" />} />
                <Small icon={<LayerIcon m="unlock" />} />
                <Small icon={<LayerIcon m="match" />} label="Match Layer" />
              </Rows>
            </Stack>
          </RibbonPanel>
          <RibbonPanel w={161} title="Block">
            <Big w={42} icon={<InsertIcon />} label={["Insert"]} />
            <Rows $cols="112px" $ml={2}>
              <Small icon={<CreateIcon />} label="Create" />
              <Small icon={<EditIcon />} label="Edit" />
              <Small icon={<AttrIcon />} label="Edit Attributes" arrow />
            </Rows>
          </RibbonPanel>
          <RibbonPanel w={265} title="Properties" launcher>
            <Big w={62} icon={<MatchPropIcon />} label={["Match", "Properties"]} />
            <Rows $cols="18px" $ml={2}><Small icon={<WheelIcon />} /><Small icon={<WeightIcon />} /><Small icon={<TypeIcon />} /></Rows>
            <Stack $w={180} $combos>
              <Combo><Swatch $m={10} /><Select $pad={6} aria-label="Object color"><option>ByLayer</option></Select><Arrow w={8} /></Combo>
              <Combo><Icon w={62} h={1}><path d="M-1 .500H63" stroke="#fff" /></Icon><Select aria-label="Lineweight"><option>ByLayer</option></Select><Arrow w={8} /></Combo>
              <Combo><Icon w={62} h={1}><path d="M-1 .500H63" stroke="#fff" /></Icon><Select aria-label="Linetype"><option>BYLAYER</option></Select><Arrow w={8} /></Combo>
            </Stack>
          </RibbonPanel>
          <RibbonPanel w={69} title="Groups">
            <Big w={41} icon={<GroupIcon />} label={["Group"]} />
            <Stack $w={24}>
              <Toggle aria-label="Ungroup"><UngroupIcon /></Toggle>
              <Toggle aria-label="Group edit"><GroupEditIcon /></Toggle>
              <Toggle $on aria-label="Group selection"><GroupSelIcon /></Toggle>
            </Stack>
          </RibbonPanel>
          <RibbonPanel w={97} title="Utilities">
            <Big w={70} icon={<MeasureIcon />} label={["Measure"]} arrow />
            <Stack $w={24}>
              <Toggle aria-label="Quick select"><QuickSelIcon /></Toggle>
              <Toggle aria-label="Select all"><SelAllIcon /></Toggle>
              <Toggle aria-label="Quick calculator"><CalcIcon /></Toggle>
            </Stack>
          </RibbonPanel>
          <RibbonPanel w={80} title="Clipboard" arrow={false}>
            <Big w={53} icon={<PasteIcon />} label={["Paste"]} arrow />
            <Stack $w={24}>
              <Toggle aria-label="Cut"><CutIcon /></Toggle>
              <Toggle aria-label="Copy clip"><CopyClipIcon /></Toggle>
            </Stack>
          </RibbonPanel>
          <RibbonPanel w={61} title="View" launcher>
            <Big w={60} icon={<BaseIcon />} label={["Base"]} arrow />
          </RibbonPanel>
        </Ribbon>

        <DocTabs>
          {documents.map((d, i) => {
            const active = i === documents.length - 1;
            return (
              <DocTab key={d} $active={active}>
                <DocShape active={active} />
                <span>{d}</span>
                {i > 0 && <Cross c={active ? "#55575a" : "#3a3c3d"} />}
              </DocTab>
            );
          })}
          <NewTab aria-label="New drawing"><Plus /></NewTab>
          <MoreTabs aria-label="More tabs"><Icon w={8} h={12} sw={2} s="#c4c4c4"><path d="M0 1L4 4L8 1M0 7L4 10L8 7" /></Icon></MoreTabs>
        </DocTabs>

        <Canvas>
          <Model />
          <ViewControls><button>[−]</button><button>[Top]</button><button>[2D Wireframe]</button></ViewControls>
          <ViewportButtons>
            <button aria-label="Minimize drawing"><Icon w={12} h={12}><rect x="1" y="8" width="10" height="3" fill="#eee" stroke="none" /></Icon></button>
            <button aria-label="Restore drawing"><Icon w={12} h={12} s="#eee"><path d="M4 1H11V8" strokeWidth="1.500" /><rect x="2" y="4" width="6" height="6" strokeWidth="2" /></Icon></button>
            <button aria-label="Close drawing"><Cross c="#eee" n={11} sw={2} /></button>
          </ViewportButtons>
          <ViewCube><Compass /><WcsButton>WCS<Icon w={9} h={5} s="#818284"><path d="M1 .500H8L4.500 4Z" /></Icon></WcsButton></ViewCube>
          <NavBar><NavTools /></NavBar>
          <Watermark><strong>Activate Windows</strong>Go to Settings to activate Windows.</Watermark>
          <CommandArea>
            <History>
              <Message>{"Autodesk DWG.  This file is a TrustedDWG last saved by an Autodesk application or Autodesk licensed application."}</Message>
              <Message $bright>Command:</Message>
              <Message $bright>Command:</Message>
            </History>
            <CommandLine>
              <CommandTools>
                <Icon w={5} h={17} s="#a9a9a9" sw={2}><path d="M1 0V17M4 0V17" strokeDasharray="2 1" /></Icon>
                <button aria-label="Close command line"><Cross c="#d8d8d8" n={10} sw={2} /></button>
                <button aria-label="Customize command line"><Icon w={14} h={14} s="#c4c4c4" sw={2}><path d="M1 13L9 5" /><path d="M9 1C6 3 7 7 10 7C12 7 13 6 13 4" /></Icon></button>
              </CommandTools>
              <CommandField>
                <Icon w={16} h={12} s="#54574f"><rect x=".500" y=".500" width="15" height="11" fill="#b3b6b0" strokeWidth="1.500" /><path d="M2.500 4L5 6L2.500 8M6 8.500H10" /></Icon>
                <Arrow w={6} c="#666" />
                <CommandInput aria-label="Command" placeholder="Type a command" />
                <Icon w={6} h={4}><path d="M0 4H6L3 0Z" fill="#222" stroke="none" /></Icon>
              </CommandField>
            </CommandLine>
          </CommandArea>
        </Canvas>

        <BottomBar>
          <LayoutTab $w={58} $active>Model</LayoutTab>
          <LayoutTab $w={63}>Layout1</LayoutTab>
          <AddLayout aria-label="New layout"><Plus /></AddLayout>
          <StatusBar>
            <Group $w={50}><StatusButton>MODEL</StatusButton></Group>
            <Group $w={66}>
              <StatusButton aria-label="Grid"><Icon><path d="M4.500 0V16M8.500 0V16M12.500 0V16M0 3.500H16M0 7.500H16M0 11.500H16" /></Icon></StatusButton>
              <StatusButton aria-label="Snap"><Icon w={13} h={13} sw={2}><path d="M0 1.500H13M0 6.500H13M0 11.500H13" strokeDasharray="2 3" /></Icon></StatusButton>
              <StatusButton aria-label="Snap list"><Arrow w={7} /></StatusButton>
            </Group>
            <Group $w={166}>
              <StatusButton aria-label="Ortho"><Icon><path d="M1.500 0V15.500H16M2 10.500H6.500V15" /></Icon></StatusButton>
              <StatusButton $on aria-label="Polar"><Icon><path d="M12 3A6.500 6.500 0 1 0 13 11M8 8.500H16M8 8.500L14 1M12 5V12" stroke="#fff" /></Icon></StatusButton>
              <StatusButton aria-label="Polar list"><Arrow w={7} /></StatusButton>
              <StatusButton aria-label="Isodraft"><Icon><path d="M2 1L14 15" stroke="#b4574a" /><path d="M8 0V14" stroke={G} /><rect x="7" y="7" width="2" height="2" fill="#fff" stroke="none" /></Icon></StatusButton>
              <StatusButton aria-label="Isodraft list"><Arrow w={7} /></StatusButton>
              <StatusButton $on aria-label="Object snap tracking"><Icon><path d="M0 14.500H16M1 14L15 1" stroke="#fff" strokeWidth="1.300" /><Dots at={[[8, 8]]} c="#fff" /></Icon></StatusButton>
              <StatusButton $on aria-label="Object snap"><Icon><path d="M5 2.500H14.500V14.500H2.500V6" stroke="#fff" /><rect x=".500" y=".500" width="4" height="4" stroke="#fff" /></Icon></StatusButton>
              <StatusButton aria-label="Object snap list"><Arrow w={7} /></StatusButton>
            </Group>
            <Group $w={107}>
              <StatusButton $on aria-label="Annotation visibility"><Icon><path d="M7 0C8 4 10 8 14 16L9 12V16H6V12L0 16C4 9 6 5 7 0Z" fill="#fff" stroke="none" /><circle cx="13.500" cy="3" r="2" stroke="#fff" /></Icon></StatusButton>
              <StatusButton aria-label="Auto scale"><Icon><path d="M7 1C8 5 10 9 13 15L9 12V15H6V12L1 15C4 9 6 5 7 1Z" fill={W} stroke="none" /><path d="M13 0L11 4H14L12 8" /></Icon></StatusButton>
              <StatusButton aria-label="Annotation scale icon"><Icon w={14}><path d="M7 1C8 5 10 9 13 15L9 12V15H6V12L1 15C4 9 6 5 7 1Z" fill={W} stroke="none" /></Icon></StatusButton>
              <StatusButton>1:1<Arrow w={7} /></StatusButton>
            </Group>
            <Group $w={41}>
              <StatusButton aria-label="Workspace"><Icon><circle cx="8" cy="8" r="4.300" strokeWidth="3" /><circle cx="8" cy="8" r="6.800" strokeWidth="2.500" strokeDasharray="2.800 2.540" /></Icon></StatusButton>
              <StatusButton aria-label="Workspace list"><Arrow w={7} /></StatusButton>
            </Group>
            <Group $w={25}><StatusButton aria-label="Annotation monitor"><Plus n={16} /></StatusButton></Group>
            <Group $w={26}><StatusButton aria-label="Isolate objects"><Icon><rect x=".500" y=".500" width="5" height="5" /><circle cx="13" cy="6.500" r="2.500" /><path d="M7 10L10 15.500H4Z" /></Icon></StatusButton></Group>
            <Group $w={24}><StatusButton aria-label="Hardware acceleration"><Icon><path d="M2 0H10L14 4V15H2Z" fill="#8fc4ee" stroke="none" /><path d="M2 5H14M2 9H14M6 0V15" stroke="#fff" /><path d="M2 11H8V15H2Z" fill={O} stroke="none" /><path d="M8 12L11 15L16 9" stroke="#49a84d" strokeWidth="2.500" /></Icon></StatusButton></Group>
            <Group $w={50}>
              <StatusButton aria-label="Clean screen"><Icon w={16} h={14}><rect x=".500" y=".500" width="15" height="12" /><path d="M3 8V10.500H6M13 5V2.500H10M3 10.500L6 8M13 2.500L10 5" /></Icon></StatusButton>
              <StatusButton aria-label="Customization"><Icon w={16} h={14} sw={2}><path d="M0 1H16M0 7H16M0 13H16" /></Icon></StatusButton>
            </Group>
          </StatusBar>
        </BottomBar>
      </Window>
      <DesktopFooter />
    </Desktop>
  );
}
